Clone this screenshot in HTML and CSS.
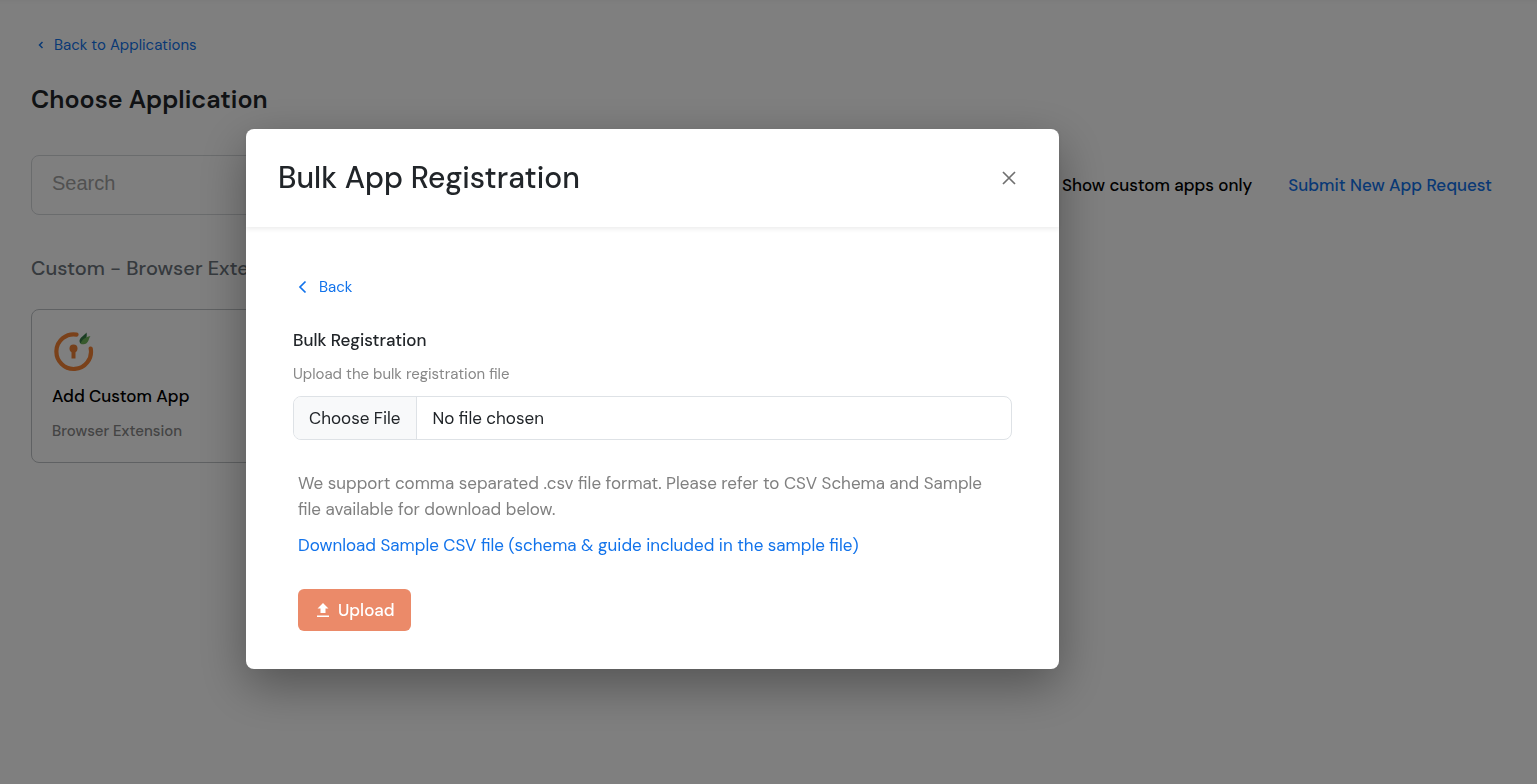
FILE: index.html
```
<!DOCTYPE html>
<html lang="en">
<head>
  <meta charset="UTF-8">
  <meta name="viewport" content="width=device-width, initial-scale=1.0">
  <title>Choose Application</title>
  <link rel="stylesheet" href="styles.css">
</head>
<body>
  <main class="page">
    <a class="back-link" href="#">
      <svg class="chevron-small" viewBox="0 0 8 10" aria-hidden="true"><path d="M5.500 2 2.500 5l3 3"/></svg>
      Back to Applications
    </a>
    <h1 class="page-title">Choose Application</h1>

    <!-- Search and filters -->
    <div class="toolbar">
      <input class="search" type="text" placeholder="Search" aria-label="Search">
      <label class="filter"><input type="checkbox"> Show custom apps only</label>
      <a class="request-link" href="#">Submit New App Request</a>
    </div>

    <h2 class="section-title">Custom - Browser Extension</h2>
    <div class="apps">
      <a class="app-card" href="#">
        <svg class="app-logo" viewBox="0 0 42 42" aria-hidden="true">
          <path class="ring" d="M24.500 4.600A17.300 17.300 0 1 0 38.700 18.500"/>
          <circle class="keyhole" cx="21.500" cy="18.500" r="4"/>
          <path class="keyhole" d="M19.500 20h4v8.500h-4z"/>
          <path class="leaf-dark" d="M28 13C26 8 31 7 34.500 2.500C35.500 7 34 11 29 13.500Z"/>
          <path class="leaf-light" d="M28.500 13.500C30 10 33 7 38.500 6C36.500 8 37 13 33 14C31 14.500 29.500 14.500 28.500 13.500Z"/>
        </svg>
        <span class="app-name">Add Custom App</span>
        <span class="app-type">Browser Extension</span>
      </a>
    </div>
  </main>

  <!-- Bulk registration modal -->
  <div class="overlay">
    <div class="modal" role="dialog" aria-modal="true" aria-labelledby="modal-title">
      <div class="modal-header">
        <h2 class="modal-title" id="modal-title">Bulk App Registration</h2>
        <button class="close" type="button" aria-label="Close">
          <svg viewBox="0 0 14 14" aria-hidden="true"><path d="M1 1l12 12M13 1 1 13"/></svg>
        </button>
      </div>
      <form class="modal-body">
        <a class="modal-back" href="#">
          <svg class="chevron" viewBox="0 0 10 14" aria-hidden="true"><path d="M7.500 1.500 2 7l5.500 5.500"/></svg>
          Back
        </a>
        <h3 class="form-title">Bulk Registration</h3>
        <label class="file-label" for="bulk-file">Upload the bulk registration file</label>
        <input class="file-input" id="bulk-file" type="file" accept=".csv">
        <div class="details">
          <p class="hint">We support comma separated .csv file format. Please refer to CSV Schema and Sample file available for download below.</p>
          <a class="sample-link" href="#">Download Sample CSV file (schema &amp; guide included in the sample file)</a>
          <button class="upload" type="button">
            <svg viewBox="0 0 12 14" aria-hidden="true"><path d="M6 0 11.500 5.500H8.500V10h-5V5.500H.5zM0 12.500h12V14H0z"/></svg>
            Upload
          </button>
        </div>
      </form>
    </div>
  </div>
</body>
</html>
```
FILE: styles.css
```
* {
  margin: 0;
  padding: 0;
  box-sizing: border-box;
}

body {
  min-height: 100vh;
  font-family: "DM Sans", Inter, sans-serif;
  font-size: 16px;
  color: #212529;
  background: #fff;
}

a {
  color: #1273eb;
  text-decoration: none;
}

input,
button {
  font-family: inherit;
}

svg {
  flex-shrink: 0;
}

/* Page */
.page {
  padding: 34px 45px 32px 31px;
}

.back-link {
  display: flex;
  align-items: center;
  gap: 9px;
  padding-left: 6px;
  font-size: 15px;
  line-height: 22px;
}

.chevron-small {
  width: 8px;
  height: 10px;
  fill: none;
  stroke: currentColor;
  stroke-width: 1.5;
}

.page-title {
  margin-top: 28px;
  font-size: 25px;
  font-weight: 600;
  line-height: 32px;
}

.toolbar {
  display: flex;
  align-items: center;
  gap: 36px;
  margin-top: 39px;
}

.search {
  flex: 1;
  max-width: 640px;
  height: 60px;
  margin-right: auto;
  padding: 0 20px 4px;
  border: 1px solid #d5d8db;
  border-radius: 8px;
  background: transparent;
  font-family: "Liberation Sans", Arial, sans-serif;
  font-size: 20px;
}

.search::placeholder {
  color: #a2a2a2;
}

.filter {
  display: flex;
  align-items: center;
  gap: 8px;
  font-size: 17px;
  font-weight: 500;
  line-height: 24px;
  color: #000;
}

.request-link {
  font-size: 17px;
  font-weight: 500;
  line-height: 24px;
}

.section-title {
  margin-top: 39px;
  font-size: 20px;
  font-weight: 500;
  line-height: 28px;
  color: #6c757d;
}

.apps {
  display: grid;
  grid-template-columns: repeat(auto-fill, minmax(320px, 1fr));
  gap: 24px;
  margin-top: 27px;
}

.app-card {
  display: flex;
  flex-direction: column;
  padding: 20px;
  border: 1px solid #bfc3c6;
  border-radius: 8px;
}

.app-logo {
  width: 42px;
  height: 42px;
}

.ring {
  fill: none;
  stroke: #f58235;
  stroke-width: 4.2;
  stroke-linecap: round;
}

.keyhole {
  fill: #ed8136;
}

.leaf-dark {
  fill: #347d46;
}

.leaf-light {
  fill: #70b55b;
}

.app-name {
  margin-top: 12px;
  font-size: 17px;
  font-weight: 500;
  line-height: 24px;
  color: #000;
}

.app-type {
  margin-top: 12px;
  font-size: 15px;
  font-weight: 500;
  line-height: 22px;
  color: #888;
}

/* Modal */
.overlay {
  position: fixed;
  inset: 0;
  padding: 129px 232px 32px 0;
  background: rgba(0, 0, 0, 0.5);
  box-shadow: inset 0 6px 6px -6px rgba(0, 0, 0, 0.06);
  overflow: auto;
}

.modal {
  width: 100%;
  max-width: 813px;
  margin: 0 auto;
  border-radius: 8px;
  background: #fff;
  box-shadow: 0 16px 48px rgba(0, 0, 0, 0.35);
}

.modal-header {
  display: flex;
  align-items: center;
  justify-content: space-between;
  padding: 32px;
  box-shadow: 0 2px 5px rgba(0, 0, 0, 0.08);
}

.modal-title {
  font-size: 30px;
  font-weight: 500;
  line-height: 34px;
}

.close {
  display: flex;
  padding: 10px 11px;
  border: none;
  background: none;
  color: #707070;
  cursor: pointer;
}

.close svg {
  width: 14px;
  height: 14px;
  fill: none;
  stroke: currentColor;
  stroke-width: 1.7;
}

.modal-body {
  padding: 49px 47px 38px;
}

.modal-back {
  display: flex;
  align-items: center;
  gap: 11px;
  padding-left: 5px;
  font-size: 15px;
  line-height: 22px;
}

.chevron {
  width: 10px;
  height: 14px;
  fill: none;
  stroke: currentColor;
  stroke-width: 1.7;
}

.form-title {
  margin-top: 30px;
  font-size: 17px;
  font-weight: 500;
  line-height: 24px;
}

.file-label {
  display: block;
  margin-top: 11px;
  font-size: 15px;
  line-height: 22px;
  color: #888;
}

.file-input {
  display: block;
  width: 100%;
  height: 44px;
  margin-top: 11px;
  border: 1px solid #dee2e6;
  border-radius: 8px;
  font-size: 17px;
  line-height: 42px;
  color: #212529;
  overflow: hidden;
}

.file-input::file-selector-button {
  height: 42px;
  margin-right: 15px;
  padding: 0 16px 0 15px;
  border: none;
  border-right: 1px solid #dee2e6;
  background: #f8f9fa;
  color: inherit;
  font: inherit;
}

.details {
  padding: 30px 5px 0;
}

.hint {
  font-size: 17px;
  line-height: 26px;
  color: #808080;
}

.sample-link {
  display: block;
  margin-top: 10px;
  font-size: 17px;
  line-height: 26px;
}

.upload {
  display: flex;
  align-items: center;
  gap: 9px;
  margin-top: 31px;
  padding: 8px 16px 8px 19px;
  border: none;
  border-radius: 6px;
  background: #eb8a69;
  color: #fff;
  font-size: 17px;
  font-weight: 500;
  line-height: 26px;
  cursor: pointer;
}

.upload svg {
  width: 12px;
  height: 14px;
  fill: currentColor;
}
```
